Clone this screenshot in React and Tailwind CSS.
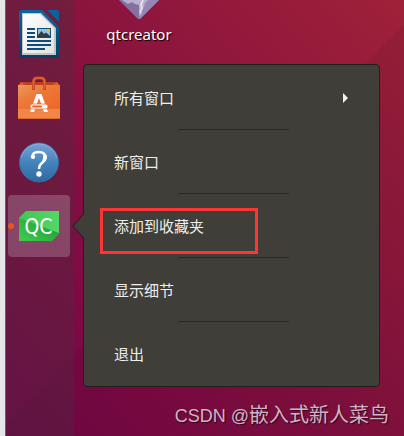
function WriterIcon() {
  return (
    <svg viewBox="0 0 42 50" className="h-[50px] w-[42px]" aria-hidden="true">
      <defs>
        <linearGradient id="writerBlue" x1="0" y1="0" x2="0" y2="1">
          <stop offset="0" stopColor="#0869a3" />
          <stop offset="1" stopColor="#063f63" />
        </linearGradient>
        <linearGradient id="writerPaper" x1="0" y1="0" x2="1" y2="1">
          <stop offset="0" stopColor="#ffffff" />
          <stop offset="1" stopColor="#e2e2e2" />
        </linearGradient>
      </defs>
      <path d="M4 1H24L41 18V46Q41 49 38 49H4Q1 49 1 46V4Q1 1 4 1Z" fill="url(#writerBlue)" />
      <path d="M29 1H39Q41 1 41 3V13Z" fill="#0b619b" />
      <path d="M4 4H23L38 19V46H4Z" fill="#c4c4c4" />
      <path d="M5 5H22L36 19V44H5Z" fill="url(#writerPaper)" />
      <g fill="#0b4d7c">
        <rect x="9" y="19" width="8" height="2" />
        <rect x="9" y="23" width="8" height="2" />
        <rect x="9" y="27" width="8" height="2" />
        <rect x="9" y="31" width="24" height="2" />
        <rect x="9" y="35" width="24" height="2" />
        <rect x="9" y="39" width="18" height="2" />
        <rect x="19" y="19" width="14" height="10" />
      </g>
      <rect x="20" y="20" width="12" height="8" fill="#8fc3e6" />
      <circle cx="30.5" cy="21.5" r="1.7" fill="#e7bd35" />
      <path d="M20 28V26L23.5 22L26 25L28 23.5L32 27V28Z" fill="#353b3c" />
    </svg>
  );
}

function SoftwareIcon() {
  return (
    <svg viewBox="0 0 42 44" className="h-[44px] w-[42px]" aria-hidden="true">
      <defs>
        <linearGradient id="bag" x1="0" y1="0" x2="0.7" y2="1">
          <stop offset="0" stopColor="#e9995a" />
          <stop offset="0.4" stopColor="#ec7839" />
          <stop offset="1" stopColor="#ee6427" />
        </linearGradient>
      </defs>
      <path d="M3 6H39L42 10H0Z" fill="#b8421d" />
      <path d="M0 10L3 6L6 8L9 10Z M42 10L39 6L36 8L33 10Z" fill="#dc5c26" />
      <rect y="9" width="42" height="34" fill="url(#bag)" />
      <rect y="33" width="42" height="10" fill="#f28548" />
      <path d="M0 42.5H42" stroke="#e0662f" />
      <path d="M15.5 14V6Q15.5 2 19 2H23Q26.5 2 26.5 6V14" fill="none" stroke="#c2451f" strokeWidth="3" />
      <path d="M15.5 13V6Q15.5 2 19 2H23Q26.5 2 26.5 6V13" fill="none" stroke="#e4632f" strokeWidth="1.6" />
      <path d="M18.5 18H23.500L30 36H26L21 22L16 36H12Z" fill="#fff" />
      <rect x="12" y="28" width="18" height="5" rx="2.5" fill="#fff" stroke="#ef6a30" strokeWidth="0.8" />
      <rect x="14" y="29.5" width="10" height="2" rx="1" fill="#ee5f22" />
    </svg>
  );
}

function HelpIcon() {
  return (
    <svg viewBox="0 0 42 42" className="h-[42px] w-[42px]" aria-hidden="true">
      <defs>
        <linearGradient id="help" x1="0" y1="0" x2="0" y2="1">
          <stop offset="0" stopColor="#77a2d6" />
          <stop offset="0.5" stopColor="#4583bd" />
          <stop offset="1" stopColor="#2d6a9f" />
        </linearGradient>
      </defs>
      <ellipse cx="21" cy="23" rx="20" ry="19" fill="#000" opacity="0.12" />
      <circle cx="21" cy="21.5" r="19.5" fill="url(#help)" stroke="#386fa3" strokeWidth="1" />
      <path d="M3 17A18.5 18.5 0 0 1 39 17" fill="none" stroke="#9dbde2" strokeWidth="1" opacity="0.6" />
      <path d="M14.5 16Q14 11 20.5 11Q27.5 11 27.5 16.500Q27.500 19 24.500 21.500Q21 24 21 28" fill="none" stroke="#fff" strokeWidth="2.4" />
      <path d="M24.500 11.500Q31 14 28 19.500L22 24Q26.500 18 24.500 11.500Z" fill="#fff" />
      <circle cx="15" cy="15.8" r="2.2" fill="#fff" />
      <circle cx="21" cy="33" r="2.7" fill="#fff" />
    </svg>
  );
}

function QtIcon() {
  return (
    <svg viewBox="0 0 40 30" className="h-[30px] w-[40px]" aria-hidden="true">
      <defs>
        <linearGradient id="qtBase" x1="0" y1="1" x2="0.7" y2="0.2">
          <stop offset="0" stopColor="#41cd52" />
          <stop offset="1" stopColor="#1b9e30" />
        </linearGradient>
        <linearGradient id="qtTop" x1="0" y1="0" x2="1" y2="0">
          <stop offset="0" stopColor="#43c556" />
          <stop offset="1" stopColor="#55d768" />
        </linearGradient>
      </defs>
      <path d="M7 0H40V23L33 30H0V7Z" fill="url(#qtBase)" />
      <path d="M7 0H40V22L0 7Z" fill="url(#qtTop)" />
      <text
        x="19.5"
        y="23"
        textAnchor="middle"
        fill="#fff"
        fontSize="21"
        fontFamily="'DejaVu Sans Condensed', 'Noto Sans', sans-serif"
      >
        QC
      </text>
    </svg>
  );
}

function DesktopGem() {
  return (
    <svg viewBox="0 0 42 20" className="h-5 w-[42px]" aria-hidden="true">
      <path d="M1 0H41L22.5 18.500Q21 19.500 19.500 18.500Z" fill="#83729f" />
      <path d="M21 0H41L22.500 18.500L21 19Z" fill="#9686b8" />
      <path d="M4 0H30L27 3L26 7L23 9L24 14L21 16V5L17 4L14 2L10 4Z" fill="#b9b0cf" />
      <path d="M25 0L23 5L24 8L22 13" fill="none" stroke="#e4deed" strokeWidth="2" />
    </svg>
  );
}

const apps = [
  { name: "LibreOffice Writer", icon: WriterIcon },
  { name: "Ubuntu Software", icon: SoftwareIcon },
  { name: "Help", icon: HelpIcon },
  { name: "Qt Creator", icon: QtIcon, active: true },
];

const menuItems = [
  { label: "所有窗口", submenu: true },
  { label: "新窗口" },
  { label: "添加到收藏夹", highlighted: true },
  { label: "显示细节" },
  { label: "退出" },
];

function Dock() {
  return (
    <nav className="flex w-[69px] shrink-0 flex-col gap-[2px] border-l border-[#6a6068] bg-[#483040]/35 px-[2px] pt-[3px]">
      {apps.map(({ name, icon: Icon, active }) => (
        <button
          key={name}
          type="button"
          aria-label={name}
          className={
            active
              ? "relative flex h-[62px] w-[62px] items-center justify-center rounded bg-white/20"
              : "flex h-[62px] w-[62px] items-center justify-center"
          }
        >
          {active && <span className="absolute top-[28px] left-0 h-[6px] w-[6px] rounded-full bg-[#e95420]" />}
          <Icon />
        </button>
      ))}
    </nav>
  );
}

function ContextMenu() {
  return (
    <div role="menu" className="relative mr-6 ml-[9px] rounded border border-[#201f1c] bg-[#3f3e38] py-px">
      <svg viewBox="0 0 12 26" className="absolute top-[148px] -left-[12px] h-[26px] w-3" aria-hidden="true">
        <path d="M12 1L1 13L12 25Z" fill="#3f3e38" />
        <path d="M11.5 1L1 13L11.5 25" fill="none" stroke="#201f1c" />
      </svg>
      {menuItems.map((item, index) => (
        <div key={item.label}>
          {index > 0 && <div className="ml-[94px] h-px w-[111px] bg-[#292823]" />}
          <button
            type="button"
            role="menuitem"
            className="relative flex h-[63px] w-full items-center justify-between pr-[31px] pl-[30px] text-[15px] leading-5 text-[#eeeeec]"
          >
            {item.label}
            {item.submenu && (
              <svg viewBox="0 0 5 10" className="h-[10px] w-[5px]" aria-hidden="true">
                <path d="M0 0L5 5L0 10Z" fill="#f3f2ee" />
              </svg>
            )}
            {item.highlighted && (
              <span className="absolute top-[14px] left-4 h-[46px] w-[158px] border-3 border-[#ff3434]" />
            )}
          </button>
        </div>
      ))}
    </div>
  );
}

export default function App() {
  return (
    <div className="flex min-h-screen bg-[linear-gradient(135deg,transparent_51%,rgba(0,0,0,0.06)_51%),linear-gradient(to_top_right,#740447,#86113f,#9f2139)] font-['Noto_Sans','Noto_Sans_CJK_SC',sans-serif]">
      <div className="w-[5px] shrink-0 bg-[#e4e6e8]" />
      <Dock />
      <main className="flex min-w-0 flex-1 flex-col">
        <div className="ml-[25px] flex h-16 w-20 flex-col items-center">
          <DesktopGem />
          <span className="mt-1 text-[15px] leading-5 text-white [text-shadow:1px_1px_1px_#000]">qtcreator</span>
        </div>
        <ContextMenu />
        <p className="mt-[14px] mr-[15px] text-right font-['Liberation_Sans','Noto_Sans_CJK_SC',sans-serif] text-xl leading-7 whitespace-nowrap text-[#d0b4c6] [text-shadow:1px_1px_1px_#30051c]">
          <span className="text-lg leading-7">CSDN @</span>嵌入式新人菜鸟
        </p>
      </main>
    </div>
  );
}
